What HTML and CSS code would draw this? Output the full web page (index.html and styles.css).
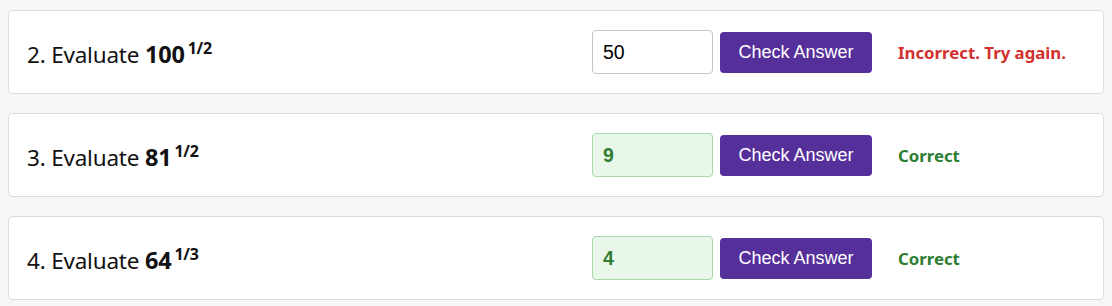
FILE: index.html
```html
<!DOCTYPE html>
<html>
<head>
<meta charset="utf-8">
<link rel="stylesheet" href="styles.css">
</head>
<body>
<div class="list">
  <div class="card">
    <div class="question">2. Evaluate <b>100</b><sup>1/2</sup></div>
    <div class="controls">
      <input class="answer" type="text" value="50">
      <button class="check">Check Answer</button>
      <span class="msg wrong">Incorrect. Try again.</span>
    </div>
  </div>
  <div class="card">
    <div class="question">3. Evaluate <b>81</b><sup>1/2</sup></div>
    <div class="controls">
      <input class="answer ok" type="text" value="9">
      <button class="check">Check Answer</button>
      <span class="msg right">Correct</span>
    </div>
  </div>
  <div class="card">
    <div class="question">4. Evaluate <b>64</b><sup>1/3</sup></div>
    <div class="controls">
      <input class="answer ok" type="text" value="4">
      <button class="check">Check Answer</button>
      <span class="msg right">Correct</span>
    </div>
  </div>
</div>
</body>
</html>
```
FILE: styles.css
```css
html, body {
  margin: 0;
  padding: 0;
  background: #f6f6f6;
}
.list {
  padding: 10px 8px;
  display: flex;
  flex-direction: column;
  gap: 19px;
}
.card {
  background: #fff;
  border: 1px solid #dcdcdc;
  border-radius: 5px;
  height: 82px;
  padding: 0 18px 0 18px;
  display: flex;
  align-items: center;
  justify-content: space-between;
}
.question {
  font-family: "Noto Sans", sans-serif;
  font-size: 22.5px;
  color: #111;
  padding-top: 3px;
  letter-spacing: -0.2px;
}
.question b {
  font-weight: 700;
  font-size: 23.5px;
}
.question sup {
  font-size: 16px;
  font-weight: 700;
  margin-left: 3px;
  vertical-align: 9px;
  line-height: 0;
}
.controls {
  display: flex;
  align-items: center;
}
.answer {
  box-sizing: border-box;
  width: 121px;
  height: 44px;
  border: 1px solid #c4c4c4;
  border-radius: 4px;
  padding: 0 10px;
  font-family: "Liberation Sans", Arial, sans-serif;
  font-size: 19.5px;
  color: #000;
  background: #fff;
  outline: none;
}
.answer.ok {
  background: #e9f6ea;
  border-color: #a6d8a8;
  color: #2e7d32;
  font-weight: 700;
}
.check {
  box-sizing: border-box;
  width: 152px;
  height: 41px;
  margin-left: 7px;
  border: none;
  border-radius: 4px;
  background: #55309a;
  color: #fff;
  font-family: "Liberation Sans", Arial, sans-serif;
  font-size: 18px;
  cursor: pointer;
}
.msg {
  width: 187px;
  margin-left: 26px;
  font-family: "Noto Sans", sans-serif;
  font-size: 16.8px;
  font-weight: 700;
}
.msg.wrong { color: #d32f2f; }
.msg.right { color: #2e7d32; }
```
